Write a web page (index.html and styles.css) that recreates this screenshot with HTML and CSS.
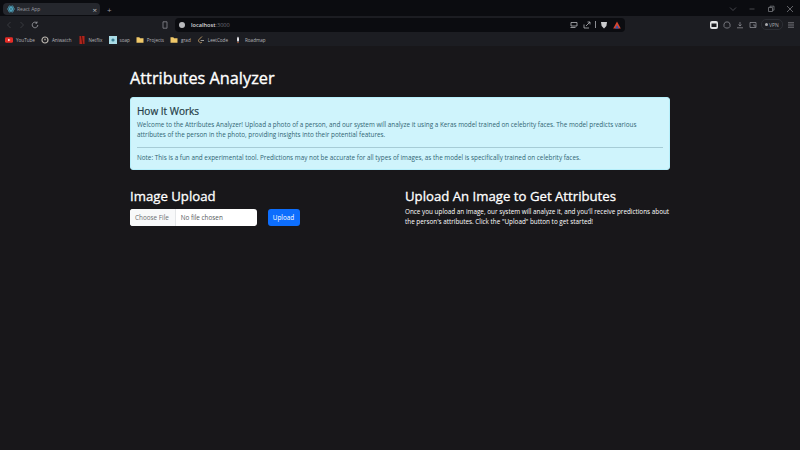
FILE: index.html
```html
<!DOCTYPE html>
<html lang="en">
<head>
  <meta charset="UTF-8">
  <title>React App</title>
  <link rel="stylesheet" href="styles.css">
</head>
<body>
  <div class="tabstrip">
    <div class="tab">
      <svg class="tab-icon" viewBox="0 0 10 10"><circle cx="5" cy="5" r="1" fill="#61dafb"/><ellipse cx="5" cy="5" rx="4.5" ry="1.8" fill="none" stroke="#61dafb" stroke-width=".6"/><ellipse cx="5" cy="5" rx="4.5" ry="1.8" fill="none" stroke="#61dafb" stroke-width=".6" transform="rotate(60 5 5)"/><ellipse cx="5" cy="5" rx="4.5" ry="1.8" fill="none" stroke="#61dafb" stroke-width=".6" transform="rotate(120 5 5)"/></svg>
      <span class="tab-title">React App</span>
      <span class="tab-close">×</span>
    </div>
    <span class="tab-new">+</span>
    <div class="win-controls">
      <svg viewBox="0 0 8 8"><path d="M1 2.5 4 5.5 7 2.5" fill="none" stroke="#55565c" stroke-width=".8"/></svg>
      <svg viewBox="0 0 8 8"><path d="M1.5 4H6.5" stroke="#55565c" stroke-width=".8"/></svg>
      <svg viewBox="0 0 8 8"><path d="M1.5 2.5h4v4h-4zM3 2.5V1.2h4v4H5.5" fill="none" stroke="#77787e" stroke-width=".8"/></svg>
      <svg viewBox="0 0 8 8"><path d="M1 1 7 7M7 1 1 7" stroke="#77787e" stroke-width=".8"/></svg>
    </div>
  </div>

  <div class="toolbar">
    <div class="nav-btns">
      <svg viewBox="0 0 8 8"><path d="M5.5 1 2.5 4 5.5 7" fill="none" stroke="#3f4046" stroke-width=".8"/></svg>
      <svg viewBox="0 0 8 8"><path d="M2.5 1 5.5 4 2.5 7" fill="none" stroke="#3f4046" stroke-width=".8"/></svg>
      <svg viewBox="0 0 8 8"><path d="M6.8 4A2.8 2.8 0 1 1 5.8 1.8M6 .5V2.2H4.4" fill="none" stroke="#a5a6ab" stroke-width=".8"/></svg>
    </div>
    <svg class="bookmark-icon" viewBox="0 0 8 8"><path d="M2 .8h4v6.4h-4z" fill="none" stroke="#8b8c92" stroke-width=".8"/></svg>
    <div class="urlbar">
      <span class="url-dot"></span>
      <span class="url-host">localhost</span><span class="url-port">:3000</span>
      <div class="url-actions">
        <svg viewBox="0 0 8 8"><path d="M1 1.5h6v3.5h-6zM.5 6.5h5" fill="none" stroke="#b5b6ba" stroke-width=".8"/></svg>
        <svg viewBox="0 0 8 8"><path d="M1 3.5v3.5h5M3 5 7 1M4.5 1H7v2.5" fill="none" stroke="#b5b6ba" stroke-width=".8"/></svg>
        <span class="url-sep"></span>
        <svg viewBox="0 0 8 8"><path d="M1 1h6l-.6 4L4 7.5 1.6 5z" fill="#c9cacd"/></svg>
        <svg viewBox="0 0 8 8"><path d="M4 .5 7.8 7.5H.2z" fill="#d8452e"/><path d="M4 4 6 7.5H2z" fill="#2f55b0"/></svg>
      </div>
    </div>
    <div class="tool-icons">
      <span class="tool-active"><svg viewBox="0 0 8 8"><path d="M1.5 2.5h5v3.5h-5z" fill="#1a1b1f"/></svg></span>
      <svg viewBox="0 0 8 8"><path d="M2.5 1h3L7 3v2.5L5.5 7h-3L1 5.5V3z" fill="none" stroke="#8b8c92" stroke-width=".8"/></svg>
      <svg viewBox="0 0 8 8"><path d="M4 1v4M2.5 3.6 4 5l1.5-1.4M1 6.8h6" fill="none" stroke="#8b8c92" stroke-width=".8"/></svg>
      <svg viewBox="0 0 8 8"><path d="M1 1.5h6v5h-6zM4 4h2v2" fill="none" stroke="#8b8c92" stroke-width=".8"/></svg>
      <span class="vpn"><i></i>VPN</span>
      <svg viewBox="0 0 8 8"><path d="M1 1.8h6M1 4h6M1 6.2h6" stroke="#8b8c92" stroke-width=".8"/></svg>
    </div>
  </div>

  <div class="bookmarks">
    <span class="bm"><svg viewBox="0 0 8 8"><rect y="1.2" width="8" height="5.6" rx="1.4" fill="#e52d27"/><path d="M3.2 2.8 5.4 4 3.2 5.2z" fill="#fff"/></svg>YouTube</span>
    <span class="bm"><svg viewBox="0 0 8 8"><circle cx="4" cy="4" r="3" fill="none" stroke="#b9b4ad" stroke-width="1.2"/><circle cx="4" cy="3.6" r="1" fill="#8d8880"/></svg>Aniwatch</span>
    <span class="bm"><svg viewBox="0 0 8 8"><rect x="1.5" width="5" height="8" fill="#b1251c"/><path d="M2.8 0h1.2l1.4 8H4.2z" fill="#5e120d"/></svg>Netflix</span>
    <span class="bm"><svg viewBox="0 0 8 8"><rect width="8" height="8" fill="#a9dbe6"/><circle cx="4" cy="4" r="1.6" fill="#3c7f94"/></svg>soap</span>
    <span class="bm"><svg viewBox="0 0 8 8"><path d="M.5 1.2h2.8l.8 1h3.4v4.6H.5z" fill="#f0c869"/></svg>Projects</span>
    <span class="bm"><svg viewBox="0 0 8 8"><path d="M.5 1.2h2.8l.8 1h3.4v4.6H.5z" fill="#f0c869"/></svg>grad</span>
    <span class="bm"><svg viewBox="0 0 8 8"><path d="M5 .5 2 3.5a1.6 1.6 0 0 0 0 2.2l.6.6a1.6 1.6 0 0 0 2.2 0" fill="none" stroke="#c9a36a" stroke-width=".9"/><path d="M3.6 4.5H7" stroke="#a8a8a8" stroke-width=".9"/></svg>LeetCode</span>
    <span class="bm"><svg viewBox="0 0 8 8"><path d="M4 .6C5.2 1.6 5.2 4 4.8 5.4H3.2C2.8 4 2.8 1.6 4 .6z" fill="#e6e6ea"/><path d="M3.2 6h1.6L4 7.6z" fill="#d86a3a"/></svg>Roadmap</span>
  </div>

  <main class="container">
    <h1 class="page-title">Attributes Analyzer</h1>
    <section class="alert">
      <h2 class="alert-title">How It Works</h2>
      <p>Welcome to the Attributes Analyzer! Upload a photo of a person, and our system will analyze it using a Keras model trained on celebrity faces. The model predicts various attributes of the person in the photo, providing insights into their potential features.</p>
      <hr>
      <p>Note: This is a fun and experimental tool. Predictions may not be accurate for all types of images, as the model is specifically trained on celebrity faces.</p>
    </section>
    <div class="columns">
      <section class="col">
        <h2 class="col-title">Image Upload</h2>
        <form class="upload-form">
          <div class="file-input"><span class="file-btn">Choose File</span><span class="file-name">No file chosen</span></div>
          <button type="button" class="upload-btn">Upload</button>
        </form>
      </section>
      <section class="col">
        <h2 class="col-title">Upload An Image to Get Attributes</h2>
        <p class="col-text">Once you upload an image, our system will analyze it, and you'll receive predictions about the person's attributes. Click the "Upload" button to get started!</p>
      </section>
    </div>
  </main>
</body>
</html>
```

FILE: styles.css
```css
* {
  box-sizing: border-box;
}
html, body {
  height: 100%;
}
body {
  margin: 0;
  background: #18171a;
  color: #fff;
  font-family: "Open Sans", "Noto Sans", sans-serif;
  overflow: hidden;
}
svg {
  display: block;
  width: 8px;
  height: 8px;
  flex: none;
}

/* browser chrome */
.tabstrip {
  height: 16px;
  background: #0b0c10;
  display: flex;
  align-items: center;
  padding: 2px 0 0 3px;
}
.tab {
  width: 97px;
  height: 12px;
  background: #25272d;
  border-radius: 4px;
  display: flex;
  align-items: center;
  padding: 0 3px 0 4px;
  font-size: 5px;
  color: #9b9ca1;
}
.tab-icon {
  margin-right: 2px;
}
.tab-title {
  flex: 1;
}
.tab-close {
  font-size: 8px;
  color: #b8b9bd;
}
.tab-new {
  margin-left: 7px;
  font-size: 8px;
  line-height: 9px;
  color: #9a9ba0;
}
.win-controls {
  margin-left: auto;
  display: flex;
  gap: 11px;
  padding-right: 6px;
}
.toolbar {
  height: 17px;
  background: #1c1d22;
  display: flex;
  align-items: center;
  padding: 0 5px;
}
.nav-btns {
  display: flex;
  gap: 5px;
}
.bookmark-icon {
  margin-left: 122px;
}
.urlbar {
  margin-left: 6px;
  width: 450px;
  height: 14px;
  background: #0b0c10;
  border-radius: 4px;
  display: flex;
  align-items: center;
  padding: 0 4px;
  font-size: 5.6px;
  font-weight: 600;
}
.url-dot {
  width: 6px;
  height: 6px;
  border-radius: 50%;
  background: #b9babd;
  margin-right: 6px;
}
.url-host {
  color: #d6d7da;
}
.url-port {
  color: #6d6e73;
  font-weight: 400;
}
.url-actions {
  margin-left: auto;
  display: flex;
  align-items: center;
  gap: 5px;
}
.url-sep {
  width: 1px;
  height: 7px;
  margin: 0 -1px;
  background: #8b8c92;
}
.tool-icons {
  margin-left: auto;
  display: flex;
  align-items: center;
  gap: 5px;
}
.tool-active {
  width: 8px;
  height: 8px;
  background: #e2e3e5;
  border-radius: 2px;
}
.vpn {
  width: 22px;
  height: 11px;
  margin: 0 -1px;
  border: 1px solid #2c2e34;
  border-radius: 5px;
  display: flex;
  align-items: center;
  justify-content: center;
  gap: 1px;
  font-size: 5px;
  color: #a9aaae;
}
.vpn i {
  width: 3px;
  height: 3px;
  background: #a9aaae;
  border-radius: 50%;
}
.bookmarks {
  height: 13px;
  background: #1c1d22;
  display: flex;
  align-items: center;
  gap: 6px;
  padding-left: 5px;
  font-size: 4.6px;
  color: #b6b7bb;
}
.bm {
  display: flex;
  align-items: center;
  gap: 3px;
}

/* page */
.container {
  width: 540px;
  margin: 0 auto;
}
.page-title {
  margin: 22px 0 9px;
  font-size: 16.3px;
  line-height: 20px;
  font-weight: 400;
  -webkit-text-stroke: 0.35px currentColor;
}
.alert {
  background: #cff4fc;
  border: 1px solid #b6effb;
  border-radius: 3px;
  padding: 7px 6px 6px;
  color: #2f6573;
  font-size: 6.35px;
  line-height: 10px;
}
.alert p {
  margin: 0;
}
.alert-title {
  margin: 0 0 2.5px;
  font-size: 10px;
  line-height: 12px;
  font-weight: 400;
  color: #243b45;
  -webkit-text-stroke: 0.2px currentColor;
}
.alert hr {
  margin: 7px 0 5.5px;
  border: 0;
  border-top: 1px solid #a6ccd6;
}
.columns {
  display: flex;
  margin-top: 18px;
}
.col {
  width: 275px;
}
.col + .col {
  width: 265px;
}
.col-title {
  margin: 0 0 3px;
  font-size: 13.2px;
  line-height: 16px;
  font-weight: 400;
  -webkit-text-stroke: 0.3px currentColor;
}
.col-text {
  margin: 0;
  font-size: 6.35px;
  line-height: 9.8px;
  color: #fff;
}
.upload-form {
  margin-top: 5px;
  display: flex;
  align-items: center;
  gap: 10.5px;
}
.file-input {
  width: 127px;
  height: 17px;
  background: #fff;
  border-radius: 3px;
  display: flex;
  align-items: center;
  overflow: hidden;
  font-size: 6.35px;
}
.file-btn {
  height: 100%;
  padding: 0 6px 0 5px;
  background: #f8f9fa;
  border-right: 1px solid #e4e6e8;
  color: #6a6d70;
  display: flex;
  align-items: center;
}
.file-name {
  padding-left: 5px;
  color: #55585b;
}
.upload-btn {
  width: 32px;
  height: 17px;
  padding: 0;
  background: #0d6efd;
  border: 0;
  border-radius: 3px;
  color: #fff;
  font-family: inherit;
  font-size: 6.35px;
}
```
